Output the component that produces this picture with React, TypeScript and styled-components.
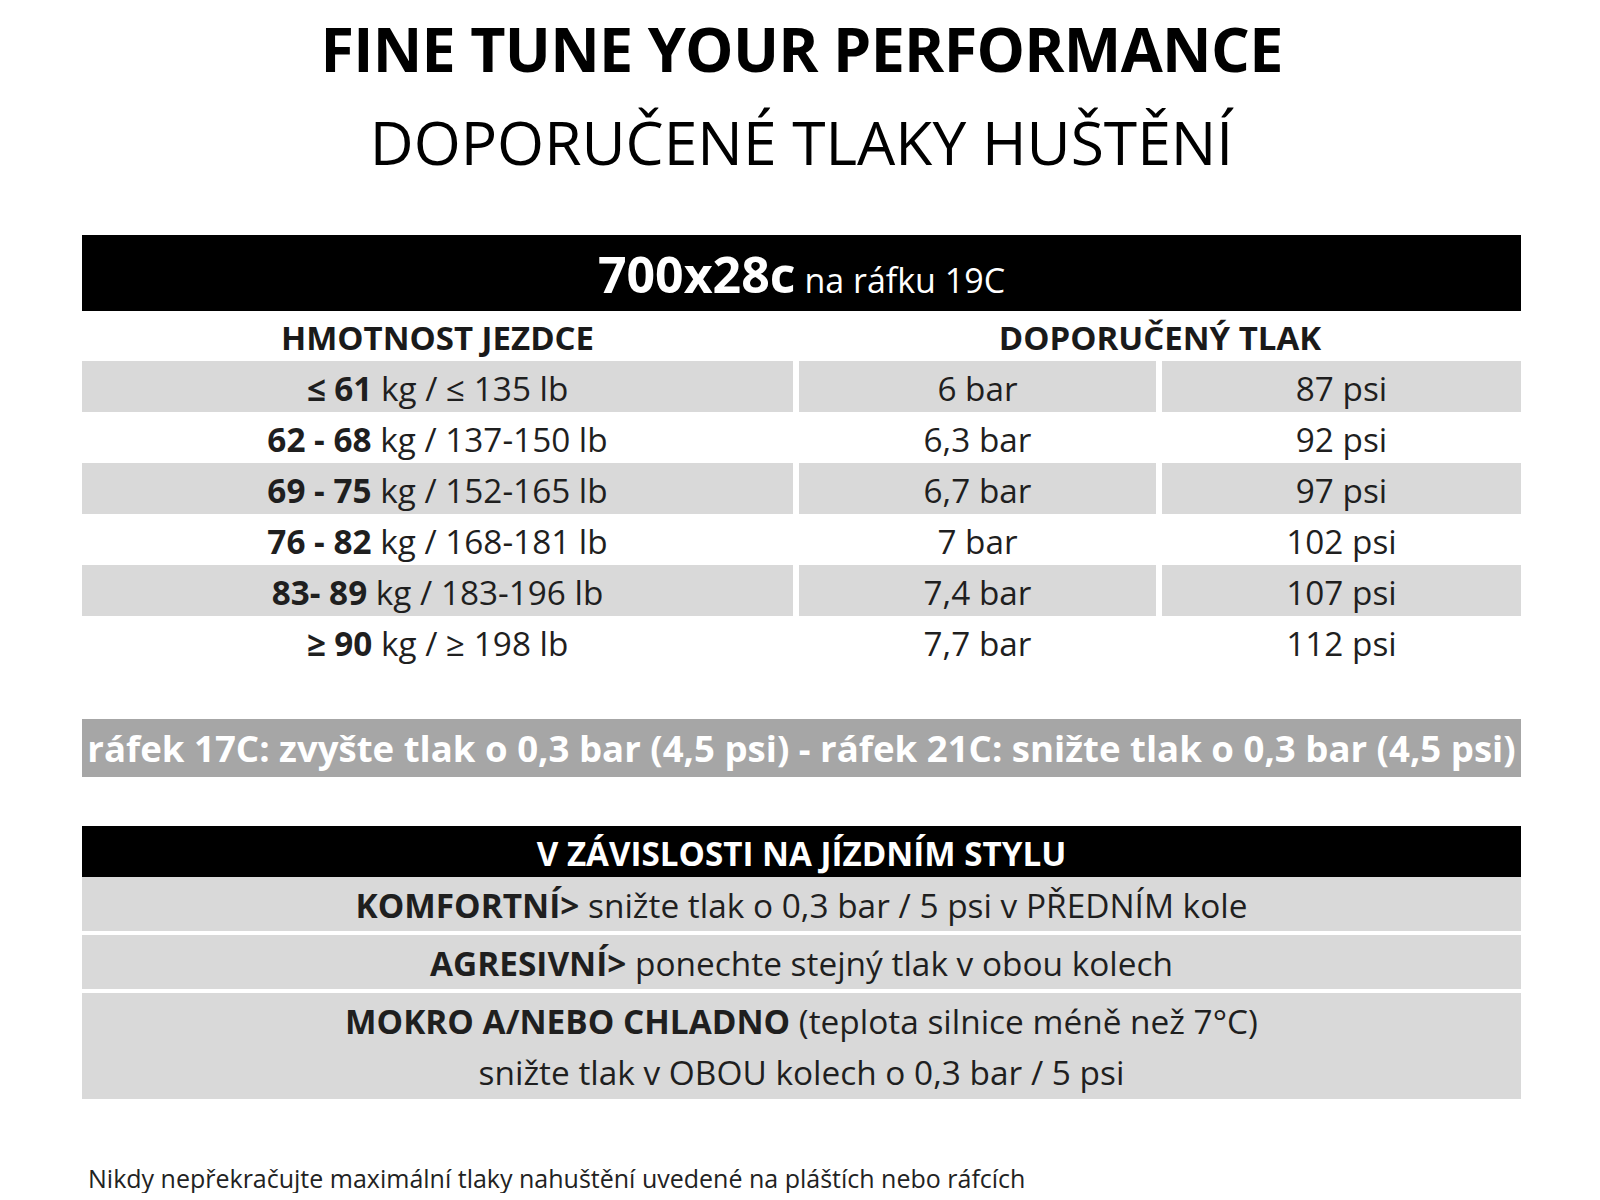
import React from "react";
import styled, { createGlobalStyle } from "styled-components";

const Global = createGlobalStyle`
  html, body { margin: 0; padding: 0; background: #ffffff; }
  body {
    font-family: "Open Sans", "Noto Sans", "Liberation Sans", sans-serif;
    color: #1f1f1f;
  }
`;

const Page = styled.div`
  width: 1439px;
  padding: 2px 79px 0 82px;
`;

const TitleLine = styled.h1<{ $bold?: boolean }>`
  margin: 0;
  text-align: center;
  font-size: ${(p) => (p.$bold ? 61 : 60.5)}px;
  letter-spacing: ${(p) => (p.$bold ? -0.7 : 0)}px;
  line-height: 93px;
  color: #000;
  font-weight: ${(p) => (p.$bold ? 700 : 400)};
  white-space: nowrap;
`;

const SizeBar = styled.div`
  margin-top: 47px;
  height: 76px;
  box-sizing: border-box;
  padding-top: 14px;
  background: #000;
  color: #fff;
  display: flex;
  justify-content: center;
  align-items: baseline;
`;

const SizeMain = styled.span`
  font-size: 50px;
  line-height: 50px;
  font-weight: 700;
`;

const SizeSub = styled.span`
  margin-left: 9px;
  font-size: 34px;
  line-height: 34px;
  font-weight: 400;
`;

const Table = styled.div`
  display: grid;
  grid-template-columns: 711px 357px 359px;
  column-gap: 6px;
`;

const HeadCell = styled.div<{ $span?: boolean }>`
  grid-column: ${(p) => (p.$span ? "2 / 4" : "1 / 2")};
  height: 50px;
  box-sizing: border-box;
  padding-top: 4px;
  line-height: 46px;
  text-align: center;
  font-size: 33px;
  font-weight: 700;
  color: #1a1a1a;
`;

const Cell = styled.div<{ $shade: boolean }>`
  height: 51px;
  box-sizing: border-box;
  padding-top: 4px;
  line-height: 47px;
  text-align: center;
  font-size: 33.3px;
  white-space: nowrap;
  background: ${(p) => (p.$shade ? "#d9d9d9" : "transparent")};
`;

const B = styled.b`
  font-weight: 700;
`;

const NoteBar = styled.div`
  margin-top: 52px;
  height: 58px;
  box-sizing: border-box;
  padding-top: 1px;
  background: #a6a6a6;
  color: #fff;
  text-align: center;
  font-size: 36.6px;
  line-height: 57px;
  font-weight: 700;
  white-space: nowrap;
`;

const StyleHead = styled.div`
  margin-top: 49px;
  height: 51px;
  box-sizing: border-box;
  padding-top: 5px;
  line-height: 46px;
  background: #000;
  color: #fff;
  text-align: center;
  font-size: 33.2px;
  font-weight: 700;
`;

const StyleList = styled.div`
  display: flex;
  flex-direction: column;
  gap: 4px;
`;

const StyleRow = styled.div<{ $lines?: number }>`
  height: ${(p) => (p.$lines ?? 1) * 52 + 2}px;
  box-sizing: border-box;
  padding-top: 3px;
  background: #d9d9d9;
  text-align: center;
  font-size: 33.4px;
  line-height: 51px;
  white-space: nowrap;
`;

const Footer = styled.p`
  margin: 64px 0 0;
  padding-left: 6px;
  font-size: 25px;
  line-height: 30px;
  color: #222;
  white-space: nowrap;
`;

const rows: [string, string, string, string][] = [
  ["≤ 61", " kg / ≤ 135 lb", "6 bar", "87 psi"],
  ["62 - 68", " kg / 137-150 lb", "6,3 bar", "92 psi"],
  ["69 - 75", " kg / 152-165 lb", "6,7 bar", "97 psi"],
  ["76 - 82", " kg / 168-181 lb", "7 bar", "102 psi"],
  ["83- 89", " kg / 183-196 lb", "7,4 bar", "107 psi"],
  ["≥ 90", " kg / ≥ 198 lb", "7,7 bar", "112 psi"],
];

export default function App() {
  return (
    <>
      <Global />
      <Page>
        <TitleLine $bold>FINE TUNE YOUR PERFORMANCE</TitleLine>
        <TitleLine>DOPORUČENÉ TLAKY HUŠTĚNÍ</TitleLine>

        <SizeBar>
          <SizeMain>700x28c</SizeMain>
          <SizeSub>na ráfku 19C</SizeSub>
        </SizeBar>

        <Table>
          <HeadCell>HMOTNOST JEZDCE</HeadCell>
          <HeadCell $span>DOPORUČENÝ TLAK</HeadCell>
          {rows.map(([w, rest, bar, psi], i) => (
            <React.Fragment key={w}>
              <Cell $shade={i % 2 === 0}>
                <B>{w}</B>
                {rest}
              </Cell>
              <Cell $shade={i % 2 === 0}>{bar}</Cell>
              <Cell $shade={i % 2 === 0}>{psi}</Cell>
            </React.Fragment>
          ))}
        </Table>

        <NoteBar>
          ráfek 17C: zvyšte tlak o 0,3 bar (4,5 psi) - ráfek 21C: snižte tlak o 0,3 bar (4,5 psi)
        </NoteBar>

        <StyleHead>V ZÁVISLOSTI NA JÍZDNÍM STYLU</StyleHead>
        <StyleList>
          <StyleRow>
            <B>KOMFORTNÍ&gt;</B> snižte tlak o 0,3 bar / 5 psi v PŘEDNÍM kole
          </StyleRow>
          <StyleRow>
            <B>AGRESIVNÍ&gt;</B> ponechte stejný tlak v obou kolech
          </StyleRow>
          <StyleRow $lines={2}>
            <B>MOKRO A/NEBO CHLADNO</B> (teplota silnice méně než 7°C)
            <br />
            snižte tlak v OBOU kolech o 0,3 bar / 5 psi
          </StyleRow>
        </StyleList>

        <Footer>Nikdy nepřekračujte maximální tlaky nahuštění uvedené na pláštích nebo ráfcích</Footer>
      </Page>
    </>
  );
}
